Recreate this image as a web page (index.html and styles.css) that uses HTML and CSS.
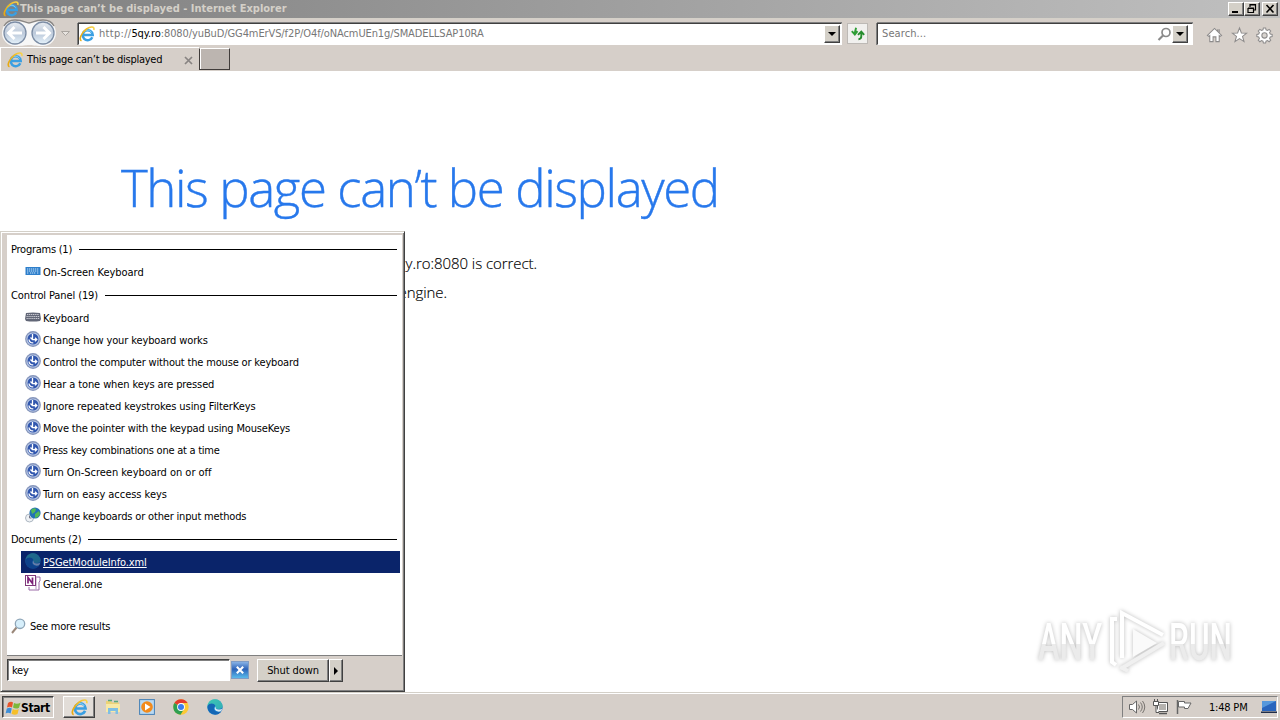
FILE: index.html
```html
<!DOCTYPE html>
<html lang="en">
<head>
<meta charset="utf-8">
<title>This page can’t be displayed</title>
<link rel="stylesheet" href="styles.css">
</head>
<body>
<svg class="defs" width="0" height="0">
  <defs>
    <linearGradient id="gold" x1="0" x2="1"><stop offset="0" stop-color="#e9a911"/><stop offset="1" stop-color="#f8d44c"/></linearGradient>
    <linearGradient id="edgeg" x1="0" y1="0" x2="1" y2="1"><stop offset="0" stop-color="#35c1c8"/><stop offset=".6" stop-color="#1683d8"/><stop offset="1" stop-color="#0c59a4"/></linearGradient>
    <linearGradient id="bluebtn" x1="0" y1="0" x2="0" y2="1"><stop offset="0" stop-color="#8fb9ea"/><stop offset=".45" stop-color="#2c62b8"/><stop offset="1" stop-color="#5cc0ee"/></linearGradient>
    <linearGradient id="orb" x1="0" y1="0" x2="0" y2="1"><stop offset="0" stop-color="#e9edf2"/><stop offset=".5" stop-color="#bcc9da"/><stop offset="1" stop-color="#e5f2fb"/></linearGradient>
    <linearGradient id="wm" x1="0" y1="0" x2="0" y2="1"><stop offset=".52" stop-color="#fff"/><stop offset=".52" stop-color="#ebebeb"/></linearGradient>
  </defs>
  <symbol id="ie" viewBox="0 0 16 16">
    <path d="M13.300 11.200A5 5 0 1 1 13.700 8.900H4.500" fill="none" stroke="#3a9fe2" stroke-width="2.500"/>
    <path d="M4.500 6.500A4.700 4.700 0 0 1 12.500 6.500" fill="none" stroke="#8fd3f7" stroke-width="1"/>
    <path d="M2.500 14.800C-.5 13.500 2.500 6.500 7.500 3 11.500.2 15.800 0 14.800 4" fill="none" stroke="url(#gold)" stroke-width="1.600"/>
  </symbol>
  <symbol id="ease" viewBox="0 0 16 16">
    <circle cx="8" cy="8" r="7.900" fill="#8595bb"/><circle cx="8" cy="8" r="6.600" fill="#b9c8e6"/><circle cx="8" cy="8" r="5.500" fill="#3157ae"/>
    <path d="M7.500 3v5.500M5.500 6.500L7.500 8.600h4M10 6.700l1.800 1.900-1.800 1.800M4 8.500c.2 2.200 2 3.500 4.300 3.400" fill="none" stroke="#fff" stroke-width="1.300"/>
  </symbol>
  <symbol id="edge" viewBox="0 0 16 16">
    <circle cx="8" cy="8" r="7.700" fill="url(#edgeg)"/>
    <path d="M.4 8C1 3.500 7 3.200 8.500 7c-3 1.500-1.500 5.500 2 6 1.500.2 2.700 0 3.700-.6A7.700 7.700 0 0 1 .4 8" fill="#1467b5"/>
    <path d="M8.500 7c-.6 1.500.6 3.300 3.400 3.100 2-.1 3.500-1.100 3.800-2.600C15.400 3 11.500.3 8 .3 4 .3 1 3 .4 7 2.500 3.700 7.500 3.800 8.500 7" fill="#41c9ab" opacity=".72"/>
    <path d="M8.700 7.500c-.6 1.500.6 3.200 3.300 3 1.500 0 2.500-.4 3.200-1-.2 1-.6 2-1.200 2.800-3.500 1.200-6.800-.8-6.300-3.300.1-.7.500-1.200 1-1.500" fill="#d6e9f2"/>
  </symbol>
</svg>

<div class="screen">
  <header class="titlebar">
    <svg class="i16"><use href="#ie"/></svg>
    <span class="title">This page can’t be displayed - Internet Explorer</span>
    <div class="winbtns">
      <span class="btn3d"><svg viewBox="0 0 12 10"><path d="M2 8h6" stroke="#000" stroke-width="2"/></svg></span>
      <span class="btn3d"><svg viewBox="0 0 12 10"><path d="M4 3V.5h5.500V6H8M3.500 1h6.500M2 4.500h5.500v4H2zM2 4h6" fill="none" stroke="#000" stroke-width="1.200"/></svg></span>
      <span class="btn3d close"><svg viewBox="0 0 12 10"><path d="M2.500 1l7 7.500M9.500 1l-7 7.500" stroke="#000" stroke-width="1.600"/></svg></span>
    </div>
  </header>

  <nav class="navbar">
    <svg class="orbs" viewBox="0 0 72 28">
      <path d="M15 1C24 1 25 4 29 4S34 1 43 1a13 13 0 0 1 0 26c-9 0-10-1-14-1s-5 1-14 1A13 13 0 0 1 15 1z" fill="#f7f7f7"/>
      <path d="M4 7C7 2 11 1 15 1c9 0 10 3 14 3S34 1 43 1c5 0 9 2 11 6" fill="none" stroke="#8b8886" stroke-width="1.300"/>
      <circle cx="15" cy="14" r="11" fill="url(#orb)" stroke="#7c8da5" stroke-width="1.300"/>
      <circle cx="43" cy="14" r="11" fill="url(#orb)" stroke="#7c8da5" stroke-width="1.300"/>
      <path d="M22 14H9M14.500 8L8.500 14l6 6M36 14h13M43.500 8l6 6-6 6" fill="none" stroke="#fff" stroke-width="3"/>
      <path d="M61.500 12.500h8l-4 4z" fill="#e8e4e0" stroke="#aaa5a0"/>
    </svg>
    <div class="field address">
      <svg class="i16"><use href="#ie"/></svg>
      <span class="url"><span class="scheme">http://</span><b>5qy.ro</b>:8080/yuBuD/GG4mErVS/f2P/O4f/oNAcmUEn1g/SMADELLSAP10RA</span>
      <span class="btn3d drop"><i class="down"></i></span>
    </div>
    <span class="refresh"><svg viewBox="0 0 20 20"><path d="M8.500 4L7 10M4 7.500L7.200 11 10 7.500" fill="none" stroke="#2f9e35" stroke-width="2"/><path d="M14 8.500v4.500c0 2-1 3-3 3M10.500 11.500L14 8l3 3.500" fill="none" stroke="#278d2e" stroke-width="2"/></svg></span>
    <div class="field search">
      <span class="hint">Search...</span>
      <svg class="mag" viewBox="0 0 15 15"><circle cx="9" cy="5.500" r="4" fill="none" stroke="#8a8a8a" stroke-width="1.700"/><path d="M6 8.500L1.500 13" stroke="#8a8a8a" stroke-width="2.200"/></svg>
      <span class="btn3d drop"><i class="down"></i></span>
    </div>
    <div class="tools">
      <svg viewBox="0 0 18 18"><path d="M1.500 9.500L9 2l7.500 7.500-1.500 1L14 9.700V16H10.500v-5h-3v5H4V9.700l-1 .8zM12.500 3v2.500M14 3v4" fill="#fff" stroke="#8d8b8b" stroke-width="1.100"/></svg>
      <svg viewBox="0 0 18 18"><path d="M9 1.500l2 5.300 5.700.2-4.500 3.500 1.600 5.500L9 12.900 4.200 16l1.600-5.500L1.300 7l5.700-.2z" fill="#fff" stroke="#8d8b8b" stroke-width="1.100"/></svg>
      <svg viewBox="0 0 18 18"><path d="M7.800 1.500h2.400l.4 2 1.600.7 1.700-1.200 1.700 1.700L14.400 6.400l.7 1.600 2 .4v2.300l-2 .4-.7 1.600 1.200 1.700-1.700 1.700-1.700-1.200-1.600.7-.4 1.900H7.800l-.4-1.900-1.600-.7-1.700 1.200-1.700-1.700 1.200-1.700-.7-1.600-2-.4V8.400l2-.4.7-1.600L2.400 4.700 4.100 3l1.700 1.200 1.600-.7z" fill="#fff" stroke="#8d8b8b" stroke-width="1.100"/><circle cx="9" cy="9.500" r="2.800" fill="#d8d4cf" stroke="#8d8b8b" stroke-width="1.100"/></svg>
    </div>
  </nav>

  <div class="tabs">
    <div class="tab">
      <svg class="i16"><use href="#ie"/></svg>
      <span class="tabname">This page can’t be displayed</span>
      <svg class="x" viewBox="0 0 9 9"><path d="M1 1l7 7M8 1L1 8" stroke="#888482" stroke-width="1.700"/></svg>
    </div>
    <div class="newtab"></div>
  </div>

  <main class="page">
    <h1>This page can’t be displayed</h1>
    <ul>
      <li class="one">Make sure the web address http://5qy.ro:8080 is correct.</li>
      <li class="two">Look for the page with your search engine.</li>
    </ul>
  </main>

  <section class="menu">
    <div class="results">
      <div class="group"><span>Programs (1)</span><hr></div>
      <div class="item wide"><svg class="i16" viewBox="0 0 16 16"><rect x=".5" y="4" width="15" height="8" fill="#2e7fcb"/><path d="M2 6h12M2 8h12M2 10h2M5 10h6M12 10h2" stroke="#c9e4fa" stroke-dasharray="1.300 .7"/></svg><span>On-Screen Keyboard</span></div>
      <div class="group medium"><span>Control Panel (19)</span><hr></div>
      <div class="item wide"><svg class="i16" viewBox="0 0 16 16"><path d="M1 4q7-1 14 0l1 6-1 2q-7 1-14 0L0 10z" fill="#626777"/><path d="M2 5.500h12M1.500 7.500h13M1.500 9.500h13" stroke="#c8c9d1" stroke-dasharray="1.300 .6"/></svg><span>Keyboard</span></div>
      <div class="item medium"><svg class="i16"><use href="#ease"/></svg><span>Change how your keyboard works</span></div>
      <div class="item snug"><svg class="i16"><use href="#ease"/></svg><span>Control the computer without the mouse or keyboard</span></div>
      <div class="item medium"><svg class="i16"><use href="#ease"/></svg><span>Hear a tone when keys are pressed</span></div>
      <div class="item roomy"><svg class="i16"><use href="#ease"/></svg><span>Ignore repeated keystrokes using FilterKeys</span></div>
      <div class="item snug"><svg class="i16"><use href="#ease"/></svg><span>Move the pointer with the keypad using MouseKeys</span></div>
      <div class="item"><svg class="i16"><use href="#ease"/></svg><span>Press key combinations one at a time</span></div>
      <div class="item wide"><svg class="i16"><use href="#ease"/></svg><span>Turn On-Screen keyboard on or off</span></div>
      <div class="item wide"><svg class="i16"><use href="#ease"/></svg><span>Turn on easy access keys</span></div>
      <div class="item snug"><svg class="i16" viewBox="0 0 16 16"><circle cx="4.500" cy="11" r="4" fill="#eef1f4" stroke="#adb7c2"/><path d="M4.500 8.500V11H6.500" fill="none" stroke="#778"/><circle cx="10" cy="6" r="5.600" fill="#2473b5"/><path d="M6 3q3-3 5-1l-1 3-3 2zM10 7l4-3 1 3-2 3-3 1z" fill="#53b957"/></svg><span>Change keyboards or other input methods</span></div>
      <div class="group"><span>Documents (2)</span><hr></div>
      <div class="item medium selected"><svg class="i16 dim"><use href="#edge"/></svg><span>PSGetModuleInfo.xml</span></div>
      <div class="item medium"><svg class="i16" viewBox="0 0 16 16"><path d="M6 2h9v4l-1 1v8H4v-3" fill="#fff" stroke="#9b6ba8"/><path d="M11 2.500v12" stroke="#b795c0"/><rect x=".5" y=".5" width="10" height="10" fill="#fff" stroke="#80397b"/><path d="M3 8.500v-6l4.500 6v-6" fill="none" stroke="#7d2178" stroke-width="1.700"/></svg><span>General.one</span></div>
      <div class="more"><svg class="i16" viewBox="0 0 16 16"><path d="M5.500 9.500L1 15" stroke="#9a8779" stroke-width="2"/><circle cx="9" cy="5.800" r="4.700" fill="#d7effb" stroke="#8fa6b8" stroke-width="1.300"/></svg><span>See more results</span></div>
    </div>
    <div class="menufoot">
      <div class="query">key</div>
      <svg class="clear" viewBox="0 0 17 17"><rect x=".5" y=".5" width="16" height="16" fill="url(#bluebtn)" stroke="#7f9cc5"/><path d="M5.500 5.500l6 6M11.500 5.500l-6 6" stroke="#fff" stroke-width="2"/></svg>
      <div class="shutdown"><span class="btn3d sd">Shut down</span><span class="btn3d arrow"><i class="right"></i></span></div>
    </div>
  </section>

  <svg class="watermark" viewBox="0 0 240 88">
    <g fill="url(#wm)">
      <text x="8" y="58" textLength="64" lengthAdjust="spacingAndGlyphs">ANY</text>
      <text x="139" y="58" textLength="63" lengthAdjust="spacingAndGlyphs">RUN</text>
    </g>
    <path d="M87 17h-5v43l4 3M92 56V11l41 22" fill="none" stroke="#fff" stroke-width="4"/>
    <path d="M92 66l42-25M98 69l-8-4" fill="none" stroke="#f0f0f0" stroke-width="4"/>
    <path d="M103 27v28l24-14z" fill="#fafafa"/>
  </svg>

  <footer class="taskbar">
    <div class="start"><svg viewBox="0 0 16 16"><path d="M3 3q3-2 5-.5L7 7.500q-2-1.500-5 0z" fill="#e8542a"/><path d="M9 3q3 1.500 6.500-.3L14 7.700q-3 1.800-6-.2z" fill="#7cb83b"/><path d="M1.800 8.500q3-1.500 5 0l-1.200 5q-2.500-1.500-5 0z" fill="#3d8ed8"/><path d="M7.800 9q3 1.700 6 0l-1.300 5q-3 1.700-6-.3z" fill="#f6bf28"/></svg><span>Start</span></div>
    <div class="task active"><svg viewBox="0 0 16 16"><use href="#ie"/></svg></div>
    <div class="quick">
      <svg viewBox="0 0 16 16"><path d="M1 2h5l1 1.500h7V13H1z" fill="#ecd377"/><path d="M3 1.500h4M9 2.500h4" stroke="#58a77c" stroke-width="1.500"/><path d="M1 5h14v8H1z" fill="#f8e9a6"/><path d="M3 15V9h10v6h-2.500v-3h-5v3z" fill="#7fbfe4"/></svg>
      <svg viewBox="0 0 16 16"><rect x=".6" y=".6" width="14.800" height="14.800" fill="#b9d9f2" stroke="#4580b6"/><circle cx="8" cy="8" r="5.800" fill="#f28a1b"/><path d="M6 4.500L11.500 8 6 11.500z" fill="#fff"/></svg>
      <svg viewBox="0 0 16 16"><circle cx="8" cy="8" r="7.700" fill="#fcc934"/><path d="M8 8L1.300 4.100A7.700 7.700 0 0 1 14.700 4.100H8z" fill="#e33b2e"/><path d="M8 8L1.300 4.100A7.700 7.700 0 0 0 7.500 15.700L11 10z" fill="#2f9f51"/><circle cx="8" cy="8" r="3.900" fill="#fff"/><circle cx="8" cy="8" r="3" fill="#3b7ded"/></svg>
      <svg viewBox="0 0 16 16"><use href="#edge"/></svg>
    </div>
    <div class="tray">
      <svg class="snd" viewBox="0 0 18 16"><path d="M1.500 5.500h3L8.500 2v12l-4-3.500h-3z" fill="#fff" stroke="#666"/><path d="M10.500 5.500q2 2.500 0 5M12.500 3.500q3.500 4.500 0 9M14.500 2q4.500 6 0 12" fill="none" stroke="#77736f"/></svg>
      <svg class="net" viewBox="0 0 17 16"><path d="M5.500 3.500h10v9h-10z" fill="#b5b2ae" stroke="#555"/><path d="M6.500 4.500h8v7h-8z" fill="none" stroke="#fff"/><path d="M7 14.500h8" stroke="#555" stroke-width="1.500"/><path d="M1.500 2.500h5v4h-5zM2.500 0v2M5.500 0v2M4 7v6.500h3" fill="#fff" stroke="#555"/></svg>
      <svg class="flag" viewBox="0 0 17 16"><path d="M1.500 1v14" stroke="#666" stroke-width="1.500"/><path d="M2.500 2.500h6v1.500h6.500l-3 5.500H8.500V8h-6z" fill="#fff" stroke="#666"/></svg>
      <span class="clock">1:48 PM</span>
      <svg class="desk" viewBox="0 0 16 14"><path d="M1 1h14v10H1z" fill="#2a65bd"/><path d="M1 1h14L1 8z" fill="#5798dc"/><path d="M0 11.500h16v1.500H0z" fill="#202d49"/></svg>
    </div>
  </footer>
</div>
</body>
</html>
```
FILE: styles.css
```css
* { box-sizing: border-box; }
body { margin: 0; background: #fff; }
svg { display: block; flex: none; }
.defs { position: absolute; }
.screen {
  position: relative; width: 1280px; height: 720px; overflow: hidden;
  display: flex; flex-direction: column;
  font: 11px/14px "DejaVu Sans Condensed", "DejaVu Sans", sans-serif;
  font-stretch: condensed; letter-spacing: -0.25px; color: #000; white-space: nowrap;
}
.i16 { width: 16px; height: 16px; }
.btn3d {
  display: flex; align-items: center; justify-content: center; background: #d4d0c8;
  border: 1px solid; border-color: #fff #404040 #404040 #fff; box-shadow: inset -1px -1px #808080;
}
.down { border: 4px solid transparent; border-top-color: #000; border-bottom: 0; }
.right { border: 4px solid transparent; border-left-color: #000; border-right: 0; }

.titlebar { height: 18px; display: flex; align-items: center; padding: 0 2px; background: linear-gradient(90deg, #808080, #c0c0c0); color: #d4d0c8; }
.title { margin-left: 1px; font-weight: bold; letter-spacing: 0; }
.titlebar > .i16 { margin-left: 1px; }
.winbtns { margin-left: auto; display: flex; }
.winbtns .btn3d { width: 16px; height: 14px; }
.winbtns .close { margin-left: 2px; }
.winbtns svg { width: 12px; height: 10px; }

.navbar { height: 29px; background: #d6cfc9; border-top: 1px solid #d4d0c8; display: flex; align-items: flex-start; }
.orbs { width: 72px; height: 28px; }
.field { height: 22px; margin-top: 4px; background: #fff; border: 1px solid; border-color: #404040 #fff #fff #404040; box-shadow: 0 -1px #808080, -1px 0 #808080; display: flex; align-items: center; }
.address { width: 764px; margin-left: 6px; padding: 0; }
.address .drop { margin-right: 1px; }
.url { color: #777; margin-left: 4px; letter-spacing: -0.1px; }
.scheme { letter-spacing: 0.3px; }
.url b { font-weight: normal; color: #000; }
.drop { width: 16px; height: 18px; margin-left: auto; margin-bottom: 1px; }
.refresh { width: 21px; height: 21px; margin: 4px 0 0 5px; border: 1px solid #bdb9b5; background: #f1f0ee; }
.refresh svg { width: 19px; height: 19px; }
.search { width: 316px; margin-left: 9px; padding: 0 4px; }
.hint { color: #777; letter-spacing: 0.1px; }
.mag { width: 15px; height: 15px; margin-left: auto; }
.search .drop { margin-left: 0; }
.tools { display: flex; gap: 7px; margin: 7px 0 0 13px; }
.tools svg { width: 17px; height: 18px; }
.tools { gap: 8px; }

.tabs { height: 24px; background: #d6cfc9; display: flex; }
.tab { width: 199px; border-left: 1px solid #fff; border-top: 1px solid #fff; padding: 1px 6px 0; display: flex; align-items: center; }
.tabname { margin-left: 4px; }
.x { width: 9px; height: 9px; margin-left: auto; }
.newtab { width: 31px; height: 22px; margin-top: 1px; background: #bcb5b0; border: 1px solid #403c3a; border-top-color: #fff; box-shadow: inset 1px 0 #fff; }

.page { flex: 1; padding: 81px 0 0 121px; font-family: "Open Sans", sans-serif; font-stretch: normal; font-weight: 300; }
h1 { margin: 0; font-size: 51px; line-height: 70px; font-weight: 300; color: #2778ec; letter-spacing: -1.42px; -webkit-text-stroke: 0.4px #2778ec; }
ul { margin: 27px 0 0; padding: 0; list-style: none; font-size: 15px; line-height: 29px; letter-spacing: -0.06px; }
li { display: flex; justify-content: flex-end; -webkit-text-stroke: 0.15px #000; }
.one { width: 416px; }
.two { width: 326px; }

.menu { position: absolute; left: 0; top: 231px; width: 405px; height: 461px; background: #d6cfc9; border: 1px solid; border-color: #d4d0c8 #404040 #404040 #d4d0c8; box-shadow: inset 1px 1px #fff, inset -1px -1px #808080; padding: 3px 2px 0 6px; }
.results { height: 421px; background: #fff; padding: 2px 2px 0 4px; border-bottom: 1px solid #808080; }
.group { height: 24px; display: flex; align-items: center; gap: 7px; padding-right: 3px; }
.group span, .item span, .more span { padding-top: 1px; }
hr { flex: 1; margin: 0; border: 0; height: 1px; background: #000; }
.item { height: 22px; margin-left: 10px; padding-left: 4px; display: flex; align-items: center; gap: 2px; }
.item .i16 { position: relative; top: -1px; }
.snug { letter-spacing: -0.17px; }
.medium { letter-spacing: -0.11px; }
.roomy { letter-spacing: -0.07px; }
.wide { letter-spacing: -0.03px; }
.selected { background: #0a246a; color: #fff; text-decoration: underline; }
.dim { opacity: .45; }
.more { height: 22px; margin-top: 20px; display: flex; align-items: center; gap: 3px; letter-spacing: -0.2px; }
.menufoot { display: flex; padding-top: 3px; }
.query { width: 223px; height: 22px; background: #fff; border: 1px solid; border-color: #404040 #fff #fff #404040; box-shadow: inset 1px 1px #808080; padding: 4px; }
.clear { width: 18px; height: 18px; margin: 2px 0 0 1px; }
.shutdown { display: flex; margin: 0 0 0 8px; }
.sd { width: 72px; height: 23px; letter-spacing: -0.1px; }
.arrow { width: 14px; height: 23px; }

.watermark { position: absolute; left: 1030px; top: 602px; width: 240px; height: 88px; filter: drop-shadow(0 0 2px #bbb); }
.watermark text { font: 500 52px "Roboto", sans-serif; letter-spacing: 0; }

.taskbar { height: 28px; background: #d6cfc9; border-top: 1px solid #d4d0c8; box-shadow: inset 0 1px #fff; display: flex; align-items: flex-start; padding: 3px 2px 0; }
.start { width: 52px; height: 22px; border: 1px solid; border-color: #404040 #fff #fff #404040; box-shadow: inset 1px 1px #808080; display: flex; align-items: center; padding: 1px 0 0 2px; font-weight: bold; font-size: 12px; letter-spacing: -0.4px; }
.start svg { width: 16px; height: 16px; }
.task { width: 32px; height: 22px; margin-left: 9px; padding: 2px 7px; background: #e2ddd8; border: 1px solid; border-color: #fff #404040 #404040 #fff; box-shadow: inset -1px -1px #808080; }
.task svg { width: 17px; height: 17px; }
.quick { display: flex; gap: 18px; margin: 3px 0 0 10px; }
.quick svg { width: 16px; height: 16px; }
.tray { margin-left: auto; width: 156px; height: 22px; border: 1px solid; border-color: #808080 #fff #fff #808080; display: flex; align-items: center; padding-left: 5px; }
.snd { width: 18px; height: 16px; }
.net { width: 17px; height: 16px; margin-left: 6px; }
.flag { width: 17px; height: 16px; margin-left: 7px; }
.clock { margin-left: 16px; padding-top: 1px; letter-spacing: -0.2px; }
.desk { width: 16px; height: 14px; margin-left: auto; }
```
